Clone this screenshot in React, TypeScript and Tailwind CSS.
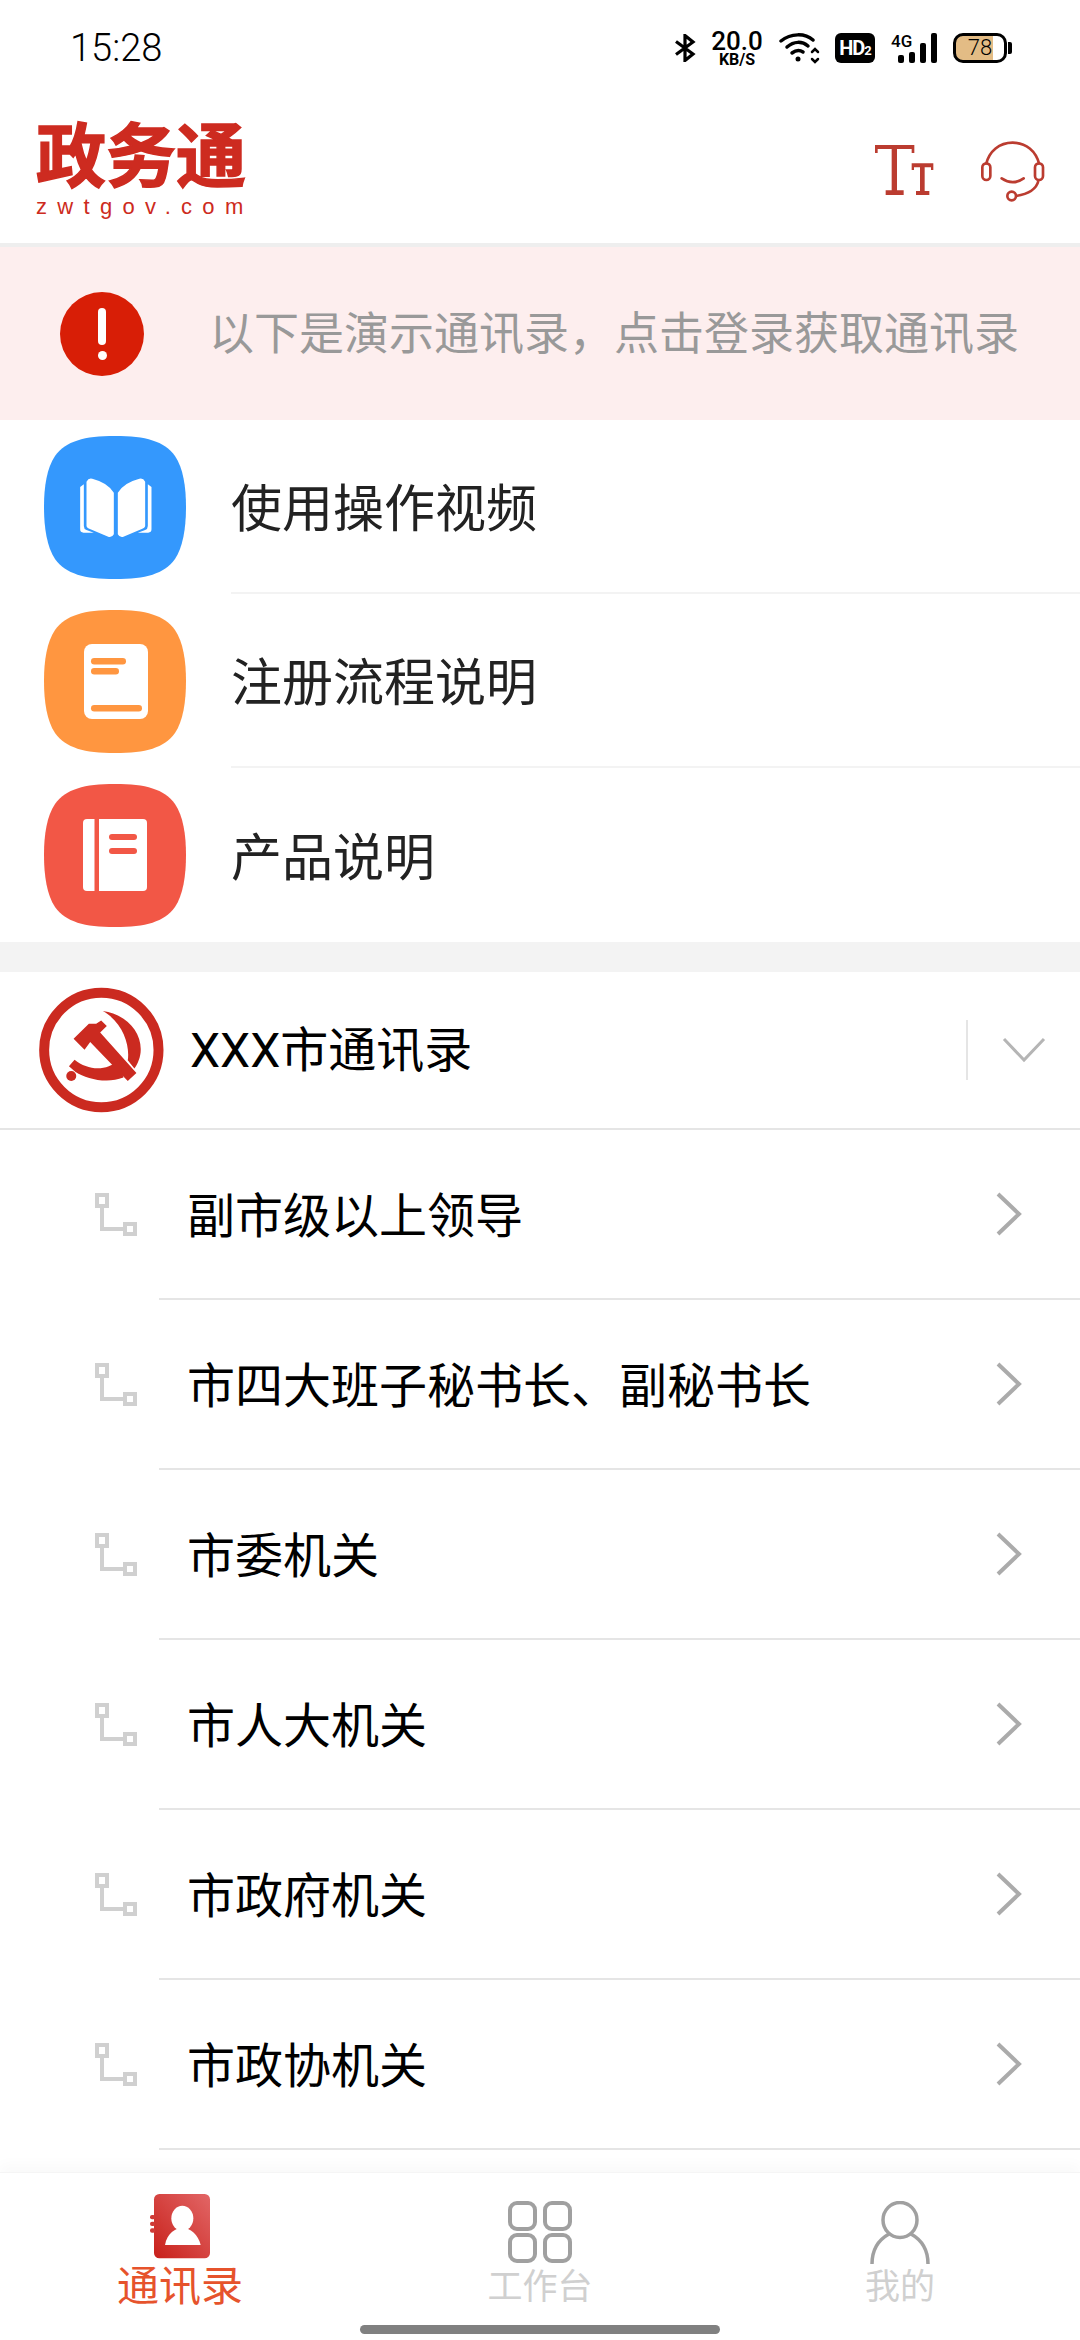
const SQ = "M71 0C102 0 120 5 131 20C139 32 142 50 142 71C142 92 139 111 131 123C120 138 102 143 71 143C40 143 22 138 11 123C3 111 0 92 0 71C0 50 3 32 11 20C22 5 40 0 71 0Z";

function BlueIcon() {
  return (
    <svg width="142" height="143" viewBox="0 0 142 143" className="shrink-0">
      <path d={SQ} fill="#3498fd" />
      <g transform="translate(16.5 25) scale(0.3333)" fill="#fff">
        <path d="M78 62Q85 48 100 55Q140 65 160 95V220Q155 230 145 228L90 205Q78 200 78 195Z" />
        <path d="M254 62Q247 48 232 55Q192 65 172 95V220Q177 230 187 228L242 205Q254 200 254 195Z" />
        <path d="M70 70L59 78V205Q59 215 69 215H100L78 207Q70 204 70 195Z" />
        <path d="M262 70L273 78V205Q273 215 263 215H232L254 207Q262 204 262 195Z" />
      </g>
    </svg>
  );
}

function OrangeIcon() {
  return (
    <svg width="142" height="143" viewBox="0 0 142 143" className="shrink-0">
      <path d={SQ} fill="#ff9640" />
      <rect x="40" y="34" width="64" height="75" rx="8" fill="#fff" />
      <rect x="47" y="48" width="35" height="6.5" rx="3.2" fill="#ff9640" />
      <rect x="47" y="58" width="28" height="6.5" rx="3.2" fill="#ff9640" />
      <rect x="47" y="95" width="51" height="6.5" rx="3.2" fill="#ff9640" />
    </svg>
  );
}

function RedIcon() {
  return (
    <svg width="142" height="143" viewBox="0 0 142 143" className="shrink-0">
      <path d={SQ} fill="#f25746" />
      <rect x="39" y="35" width="64" height="72" rx="4" fill="#fff" />
      <rect x="50.5" y="35" width="4.5" height="72" fill="#f25746" />
      <rect x="65" y="50" width="28" height="6" rx="3" fill="#f25746" />
      <rect x="65" y="64" width="28" height="6" rx="3" fill="#f25746" />
    </svg>
  );
}

function PartyIcon() {
  return (
    <svg width="125" height="126" viewBox="118 80 376 378" className="shrink-0">
      <circle cx="305.500" cy="269" r="172" fill="none" stroke="#cb2a20" strokeWidth="30" />
      <g fill="#cb2a20">
        <path d="M222 235L268 190L290 190L305 180L322 197L302 216L411 338L385 362L272 245L255 268Z" />
        <path d="M310 152C375 160 425 210 424 268C424 290 415 310 405 325L385 300C392 255 370 185 310 152Z" />
        <path d="M358 298C320 335 265 330 225 298L208 318L228 335C260 355 320 372 372 352Z" />
        <circle cx="215" cy="347" r="15" />
      </g>
    </svg>
  );
}

function TreeIcon() {
  return (
    <svg width="44" height="44" viewBox="0 0 44 44" fill="none" stroke="#d0d0d0" strokeWidth="4" className="shrink-0">
      <rect x="2" y="2" width="10" height="11" />
      <path d="M7 13V36H30" />
      <rect x="30" y="31" width="10" height="10" />
    </svg>
  );
}

function ChevronRight() {
  return (
    <svg width="26" height="44" viewBox="0 0 26 44" fill="none" stroke="#ababab" strokeWidth="4" className="shrink-0">
      <path d="M2 2L23 22L2 42" />
    </svg>
  );
}

function StatusIcons() {
  return (
    <div className="flex items-center">
      <svg width="24" height="28" viewBox="0 0 24 28" fill="none" stroke="#000" strokeWidth="3.200" className="mr-[14px]">
        <path d="M3 7.500L20 20L12 26.500V1.500L20 8L3 20.500" />
      </svg>
      <div className="w-[52px] flex flex-col items-center font-['Roboto',sans-serif] text-black">
        <span className="text-[26px] leading-[22px] font-medium">20.0</span>
        <span className="text-[16px] leading-[14px] font-bold mt-[1px]">KB/S</span>
      </div>
      <svg width="42" height="32" viewBox="0 0 42 32" fill="none" stroke="#000" strokeWidth="3.500" strokeLinecap="round" className="ml-[16px]">
        <path d="M2 9C12 1 26 1 34 8" />
        <path d="M8 15C15 9 23 9 29 14" />
        <path d="M13 21C17 18 21 18 24 20" />
        <circle cx="19" cy="27" r="2.500" fill="#000" stroke="none" />
        <path d="M33 20L36 17L39 20M33 27L36 30L39 27" strokeWidth="2.500" />
      </svg>
      <div className="ml-[14px] w-[40px] h-[30px] bg-black rounded-[6px] flex items-center justify-center text-white font-['Roboto',sans-serif] font-bold text-[20px] leading-none tracking-[-1px]">
        HD<span className="text-[13px] mt-[5px]">2</span>
      </div>
      <div className="ml-[16px] w-[50px] h-[30px] flex items-end gap-[5px] pl-[7px]">
        <span className="w-0 self-start -ml-[7px] mr-[2px] text-[17px] leading-[17px] font-medium font-['Roboto',sans-serif] text-black whitespace-nowrap">4G</span>
        <div className="w-[6px] h-[8px] rounded-[2px] bg-black" />
        <div className="w-[6px] h-[11px] rounded-[2px] bg-black" />
        <div className="w-[6px] h-[20px] rounded-[2px] bg-black" />
        <div className="w-[6px] h-[30px] rounded-[2px] bg-black" />
      </div>
      <div className="ml-[12px] flex items-center">
        <div className="w-[54px] h-[30px] rounded-[10px] border-[3px] border-black bg-[linear-gradient(90deg,#e3bc85_78%,#ffffff_78%)] flex items-center justify-center font-['Roboto',sans-serif] text-[22px] font-light text-black leading-none">
          78
        </div>
        <div className="ml-[1px] w-[4px] h-[12px] bg-black rounded-r-[2px]" />
      </div>
    </div>
  );
}

function TopRow({ icon, label, divider }: { icon: React.ReactNode; label: string; divider?: boolean }) {
  return (
    <div className="h-[174px] flex items-center pl-[44px]">
      {icon}
      <div className="h-full flex-1 ml-[45px] flex items-center">
        <div className={divider ? "w-full h-full flex items-center border-b-2 border-[#f3f3f3]" : "w-full h-full flex items-center"}>
          <span className="text-[51px] leading-none text-[#222222] pt-[6px]">{label}</span>
        </div>
      </div>
    </div>
  );
}

const items = ["副市级以上领导", "市四大班子秘书长、副秘书长", "市委机关", "市人大机关", "市政府机关", "市政协机关"];

export default function App() {
  return (
    <div className="w-[1080px] h-[2340px] bg-white overflow-hidden flex flex-col font-['Roboto','Noto_Sans_CJK_SC',sans-serif]">
      <div className="h-[96px] shrink-0 flex items-center justify-between pl-[70px] pr-[68px]">
        <span className="text-[38px] font-light text-black leading-none">15:28</span>
        <StatusIcons />
      </div>

      <div className="h-[151px] shrink-0 border-b-4 border-[#eeeeee] flex items-start justify-between pl-[36px] pr-[33px]">
        <div className="mt-[27px] w-[210px] flex flex-col">
          <span className="text-[70px] leading-[70px] font-bold text-[#cd2b20] whitespace-nowrap [-webkit-text-stroke:1.500px_#cd2b20]">政务通</span>
          <span className="mt-[2px] text-[22px] leading-[24px] text-[#cd2b20] tracking-[10.300px] font-['Liberation_Sans',sans-serif] whitespace-nowrap">zwtgov.com</span>
        </div>
        <div className="flex items-start mt-[49px]">
          <svg width="62" height="52" viewBox="0 0 186 156" fill="#bb3c30">
            <path d="M0 0H118V24H110V12H66V136H86V150H32V136H50V12H8V24H0Z" />
            <path d="M110 55H175V75H168V67H149V138H163V150H123V138H135V67H117V75H110Z" />
          </svg>
          <svg width="66" height="62" viewBox="0 0 198 186" fill="none" stroke="#bb3c30" strokeWidth="8" className="ml-[44px] -mt-[4px]">
            <path d="M15 70C25 30 55 5 95 5C135 5 165 30 175 70" />
            <rect x="4" y="67" width="24" height="50" rx="12" />
            <rect x="162" y="67" width="24" height="50" rx="12" />
            <path d="M62 112Q95 135 128 112" strokeLinecap="round" />
            <path d="M172 120C165 150 135 160 105 165" />
            <circle cx="92" cy="165" r="13" />
          </svg>
        </div>
      </div>

      <div className="h-[173px] shrink-0 bg-[#fdeeee] flex items-center pl-[60px]">
        <div className="w-[84px] h-[84px] rounded-full bg-[#d81e06] flex flex-col items-center justify-center shrink-0">
          <div className="w-[8px] h-[37px] rounded-full bg-white" />
          <div className="w-[9px] h-[9px] rounded-full bg-white mt-[6px]" />
        </div>
        <span className="ml-[65px] pt-[2px] text-[45px] leading-none text-[#999999] whitespace-nowrap">以下是演示通讯录，点击登录获取通讯录</span>
      </div>

      <div className="shrink-0">
        <TopRow icon={<BlueIcon />} label="使用操作视频" divider />
        <TopRow icon={<OrangeIcon />} label="注册流程说明" divider />
        <TopRow icon={<RedIcon />} label="产品说明" />
      </div>

      <div className="h-[30px] shrink-0 bg-[#f3f3f3]" />

      <div className="h-[158px] shrink-0 border-b-2 border-[#e5e5e5] flex items-center pl-[39px]">
        <PartyIcon />
        <span className="ml-[26px] pt-[2px] text-[48px] leading-none text-black flex-1">XXX市通讯录</span>
        <div className="w-[2px] h-[60px] bg-[#e5e5e5]" />
        <svg width="44" height="26" viewBox="0 0 44 26" fill="none" stroke="#b5b5b5" strokeWidth="3" className="ml-[34px] mr-[34px]">
          <path d="M2 2L22 23L42 2" />
        </svg>
      </div>

      <div className="flex-1 min-h-0 overflow-hidden">
        {items.map((t) => (
          <div key={t} className="h-[170px] pl-[95px] flex items-center">
            <TreeIcon />
            <div className="ml-[20px] h-full flex-1 border-b-2 border-[#e5e5e5] flex items-center justify-between pl-[28px] pr-[58px]">
              <span className="text-[48px] leading-none text-black whitespace-nowrap pt-[5px]">{t}</span>
              <ChevronRight />
            </div>
          </div>
        ))}
      </div>

      <div className="h-[168px] shrink-0 bg-white shadow-[0_-8px_12px_rgba(0,0,0,0.025)] border-t border-[#f5f5f5] flex flex-col">
        <div className="grid grid-cols-3 flex-1">
          <div className="flex flex-col items-center pt-[21px]">
            <svg width="100" height="65" viewBox="0 27 300 195">
              <defs>
                <linearGradient id="g" x1="1" y1="0" x2="0" y2="1">
                  <stop offset="0" stopColor="#e26666" />
                  <stop offset="1" stopColor="#c8201a" />
                </linearGradient>
              </defs>
              <rect x="72" y="27" width="168" height="193" rx="16" fill="url(#g)" />
              <rect x="60" y="90" width="16" height="13" rx="6" fill="#cf3a36" />
              <rect x="60" y="110" width="16" height="13" rx="6" fill="#cf3a36" />
              <rect x="60" y="130" width="16" height="13" rx="6" fill="#cf3a36" />
              <ellipse cx="157" cy="100" rx="33" ry="38" fill="#fff" />
              <path d="M105 180C110 145 138 128 157 128C180 128 205 148 212 180Z" fill="#fff" />
            </svg>
            <span className="mt-[6px] text-[42px] leading-[44px] text-[#e6532c]">通讯录</span>
          </div>
          <div className="flex flex-col items-center pt-[28px]">
            <svg width="64" height="62" viewBox="0 0 64 62" fill="none" stroke="#a0a0a0" strokeWidth="4">
              <rect x="2" y="2" width="25" height="26" rx="7" />
              <rect x="37" y="2" width="25" height="26" rx="7" />
              <rect x="2" y="34" width="25" height="26" rx="7" />
              <rect x="37" y="34" width="25" height="26" rx="7" />
            </svg>
            <span className="mt-[6px] text-[35px] leading-[38px] text-[#d0d0d0]">工作台</span>
          </div>
          <div className="flex flex-col items-center pt-[28px]">
            <svg width="60" height="64" viewBox="0 0 60 64" fill="none" stroke="#a0a0a0" strokeWidth="3.500">
              <ellipse cx="30" cy="19" rx="17" ry="17.500" />
              <path d="M2 63C2 47 10 38 19 33M58 63C58 47 50 38 41 33" />
            </svg>
            <span className="mt-[4px] text-[35px] leading-[38px] text-[#d0d0d0]">我的</span>
          </div>
        </div>
        <div className="flex justify-center pb-[6px]">
          <div className="w-[360px] h-[9px] rounded-full bg-[#808080]" />
        </div>
      </div>
    </div>
  );
}
